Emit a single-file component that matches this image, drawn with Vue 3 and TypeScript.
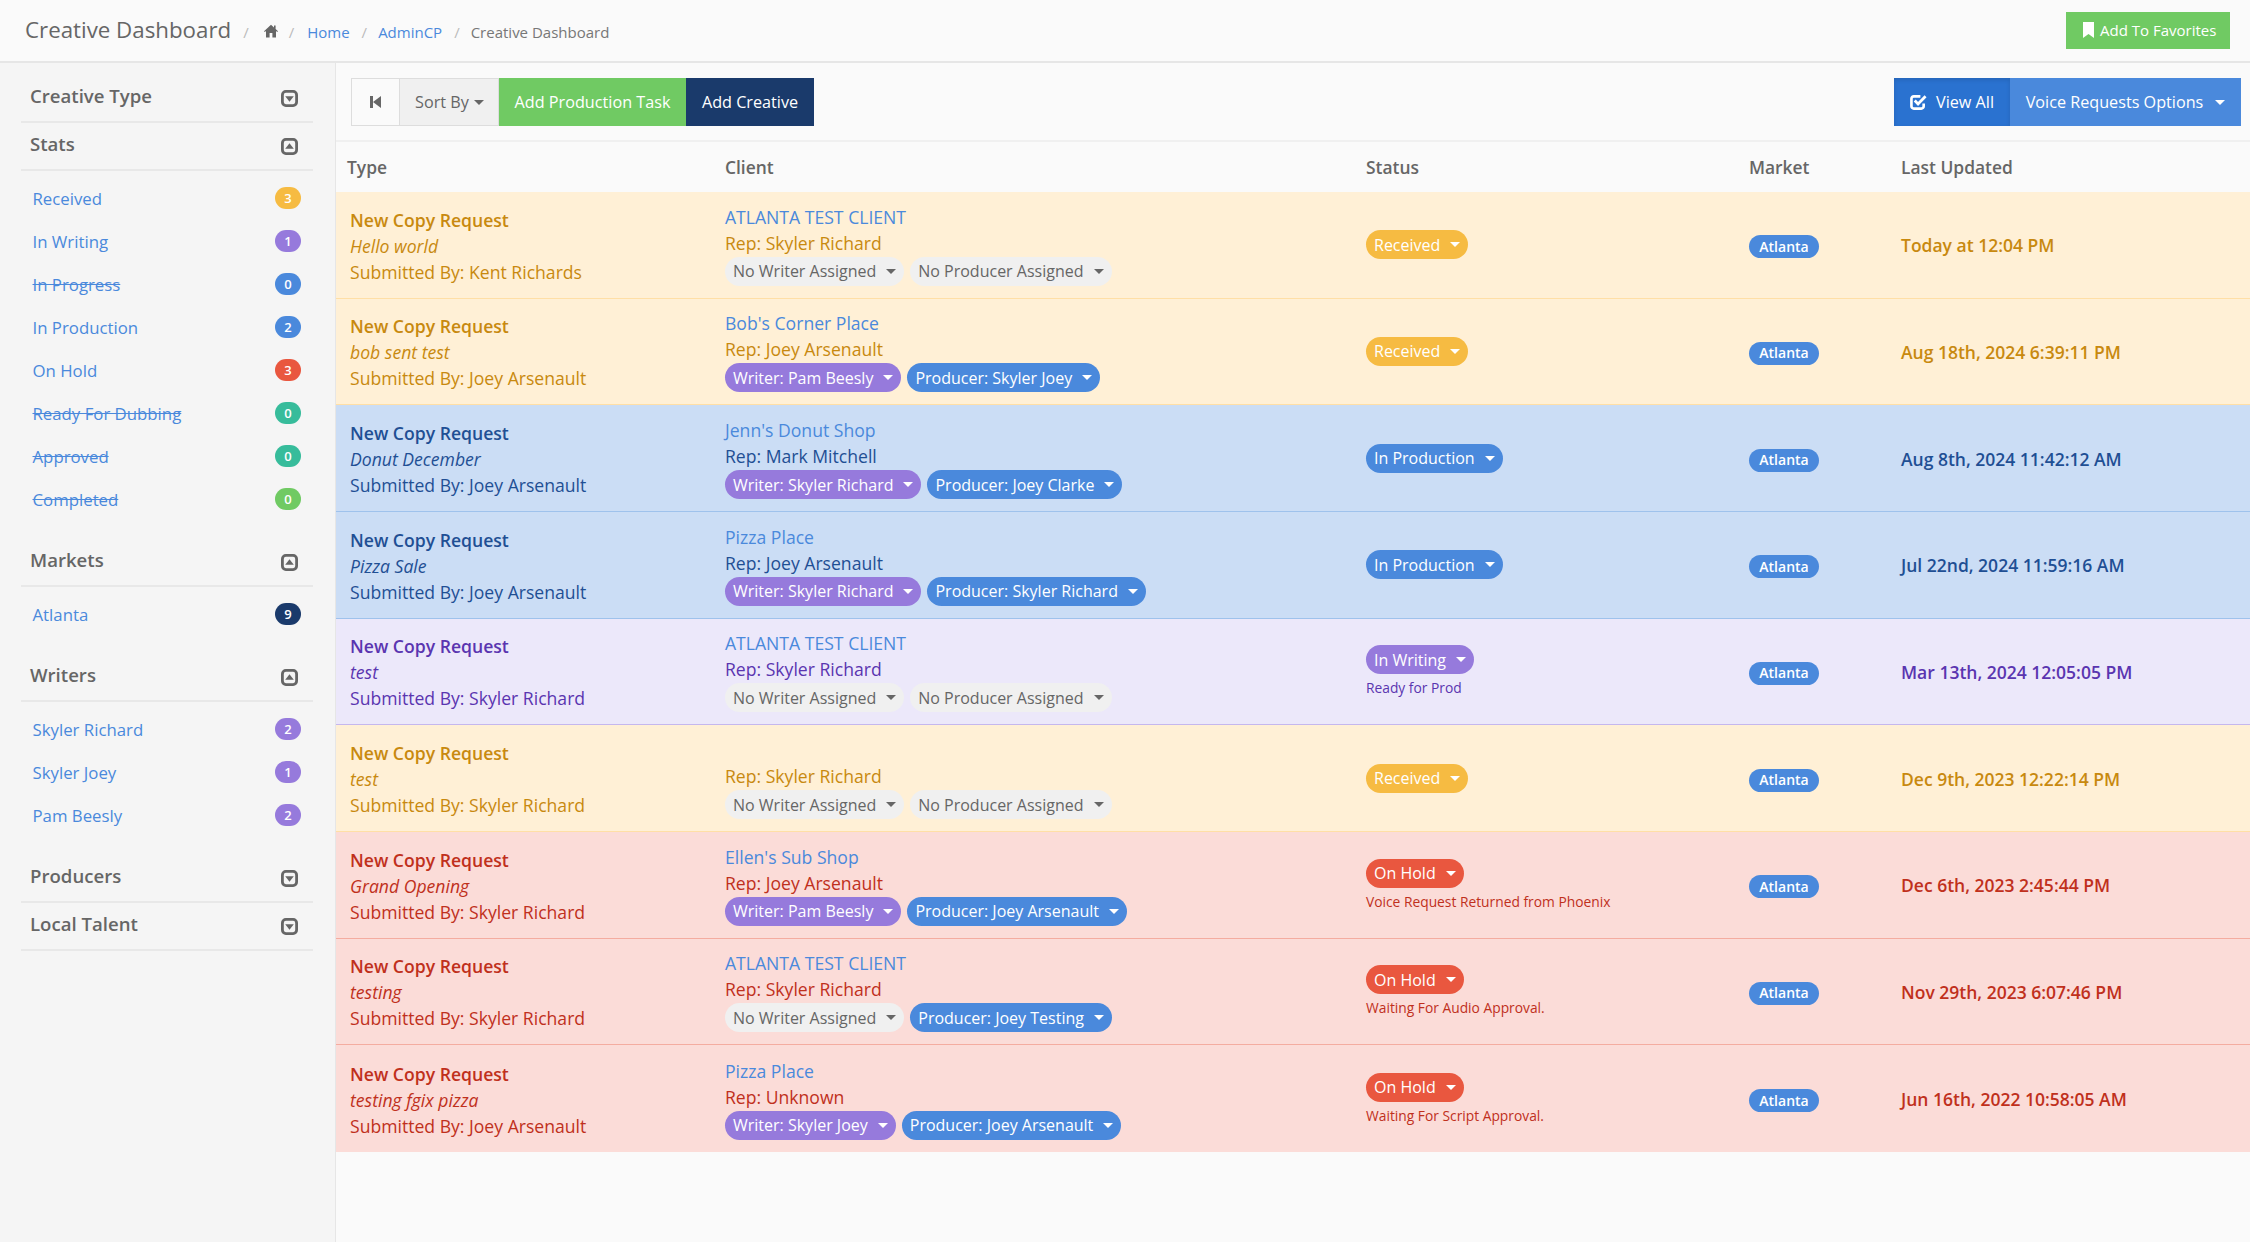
<script setup lang="ts">
type Tone = 'warning' | 'primary' | 'alert' | 'danger'
interface Person { label: string; kind: 'none' | 'writer' | 'producer' }
interface Row {
  tone: Tone; name: string; sub: string; by: string; client: string; rep: string;
  people: Person[]; status: string; note?: string; updated: string
}
interface Item { label: string; count: number; color: string; struck?: boolean }

const none: Person[] = [
  { label: 'No Writer Assigned', kind: 'none' },
  { label: 'No Producer Assigned', kind: 'none' },
]
const w = (n: string): Person => ({ label: 'Writer: ' + n, kind: 'writer' })
const p = (n: string): Person => ({ label: 'Producer: ' + n, kind: 'producer' })

const rows: Row[] = [
  { tone: 'warning', name: 'New Copy Request', sub: 'Hello world', by: 'Kent Richards', client: 'ATLANTA TEST CLIENT', rep: 'Skyler Richard', people: none, status: 'Received', updated: 'Today at 12:04 PM' },
  { tone: 'warning', name: 'New Copy Request', sub: 'bob sent test', by: 'Joey Arsenault', client: "Bob's Corner Place", rep: 'Joey Arsenault', people: [w('Pam Beesly'), p('Skyler Joey')], status: 'Received', updated: 'Aug 18th, 2024 6:39:11 PM' },
  { tone: 'primary', name: 'New Copy Request', sub: 'Donut December', by: 'Joey Arsenault', client: "Jenn's Donut Shop", rep: 'Mark Mitchell', people: [w('Skyler Richard'), p('Joey Clarke')], status: 'In Production', updated: 'Aug 8th, 2024 11:42:12 AM' },
  { tone: 'primary', name: 'New Copy Request', sub: 'Pizza Sale', by: 'Joey Arsenault', client: 'Pizza Place', rep: 'Joey Arsenault', people: [w('Skyler Richard'), p('Skyler Richard')], status: 'In Production', updated: 'Jul 22nd, 2024 11:59:16 AM' },
  { tone: 'alert', name: 'New Copy Request', sub: 'test', by: 'Skyler Richard', client: 'ATLANTA TEST CLIENT', rep: 'Skyler Richard', people: none, status: 'In Writing', note: 'Ready for Prod', updated: 'Mar 13th, 2024 12:05:05 PM' },
  { tone: 'warning', name: 'New Copy Request', sub: 'test', by: 'Skyler Richard', client: '', rep: 'Skyler Richard', people: none, status: 'Received', updated: 'Dec 9th, 2023 12:22:14 PM' },
  { tone: 'danger', name: 'New Copy Request', sub: 'Grand Opening', by: 'Skyler Richard', client: "Ellen's Sub Shop", rep: 'Joey Arsenault', people: [w('Pam Beesly'), p('Joey Arsenault')], status: 'On Hold', note: 'Voice Request Returned from Phoenix', updated: 'Dec 6th, 2023 2:45:44 PM' },
  { tone: 'danger', name: 'New Copy Request', sub: 'testing', by: 'Skyler Richard', client: 'ATLANTA TEST CLIENT', rep: 'Skyler Richard', people: [{ label: 'No Writer Assigned', kind: 'none' }, p('Joey Testing')], status: 'On Hold', note: 'Waiting For Audio Approval.', updated: 'Nov 29th, 2023 6:07:46 PM' },
  { tone: 'danger', name: 'New Copy Request', sub: 'testing fgix pizza', by: 'Joey Arsenault', client: 'Pizza Place', rep: 'Unknown', people: [w('Skyler Joey'), p('Joey Arsenault')], status: 'On Hold', note: 'Waiting For Script Approval.', updated: 'Jun 16th, 2022 10:58:05 AM' },
]

const sections: { title: string; open: boolean; items: Item[] }[] = [
  { title: 'Creative Type', open: false, items: [] },
  { title: 'Stats', open: true, items: [
    { label: 'Received', count: 3, color: '#f6bb42' },
    { label: 'In Writing', count: 1, color: '#967adc' },
    { label: 'In Progress', count: 0, color: '#4a89dc', struck: true },
    { label: 'In Production', count: 2, color: '#4a89dc' },
    { label: 'On Hold', count: 3, color: '#e9573f' },
    { label: 'Ready For Dubbing', count: 0, color: '#37bc9b', struck: true },
    { label: 'Approved', count: 0, color: '#37bc9b', struck: true },
    { label: 'Completed', count: 0, color: '#70ca63', struck: true },
  ] },
  { title: 'Markets', open: true, items: [{ label: 'Atlanta', count: 9, color: '#1a3a6b' }] },
  { title: 'Writers', open: true, items: [
    { label: 'Skyler Richard', count: 2, color: '#967adc' },
    { label: 'Skyler Joey', count: 1, color: '#967adc' },
    { label: 'Pam Beesly', count: 2, color: '#967adc' },
  ] },
  { title: 'Producers', open: false, items: [] },
  { title: 'Local Talent', open: false, items: [] },
]
const heads = ['Type', 'Client', 'Status', 'Market', 'Last Updated']
</script>

<template>
  <div class="page">
    <header class="topbar">
      <h1 class="title">Creative Dashboard</h1>
      <nav class="crumbs">
        <span class="sep first">/</span>
        <svg class="home" viewBox="0 0 14 14" width="14" height="14"><path d="M7 .8 0 7.2l.8.9L2 7v6.4h3.6V9h2.800v4.400H12V7l1.200 1.100.8-.9-2.400-2.200V1.600H10v1.900z" fill="#666" /></svg>
        <span class="sep second">/</span>
        <a class="link">Home</a>
        <span class="sep">/</span>
        <a class="link">AdminCP</a>
        <span class="sep">/</span>
        <span class="here">Creative Dashboard</span>
      </nav>
      <button class="fav">
        <svg viewBox="0 0 11 16" width="11" height="16"><path d="M0 0h11v16L5.500 12 0 16z" fill="#fff" /></svg>
        Add To Favorites
      </button>
    </header>

    <div class="body">
      <aside class="side">
        <section v-for="s in sections" :key="s.title" class="sec">
          <div class="sec-head">
            <span class="sec-title">{{ s.title }}</span>
            <svg class="toggle" viewBox="0 0 17 17" width="17" height="17">
              <rect x="1.400" y="1.400" width="14.200" height="14.200" rx="3.500" fill="none" stroke="#666" stroke-width="2.800" />
              <path v-if="s.open" d="M8.500 5.200 12.800 10.800H4.200z" fill="#666" />
              <path v-else d="M4.200 6.200h8.600L8.500 11.800z" fill="#666" />
            </svg>
          </div>
          <ul v-if="s.items.length" class="list">
            <li v-for="i in s.items" :key="i.label" class="item">
              <a class="item-link" :class="{ struck: i.struck }">{{ i.label }}</a>
              <span class="count" :style="{ background: i.color }">{{ i.count }}</span>
            </li>
          </ul>
        </section>
      </aside>

      <main class="main">
        <div class="toolbar">
          <div class="group">
            <button class="btn prev">
              <svg viewBox="0 0 12 14" width="12" height="14"><path d="M0 1h3v12H0zM3 7l8-6v12z" fill="#666" /></svg>
            </button>
            <button class="btn sort">Sort By <i class="caret dark small"></i></button>
            <button class="btn green">Add Production Task</button>
            <button class="btn navy">Add Creative</button>
          </div>
          <div class="group">
            <button class="btn deep">
              <svg viewBox="0 0 18 17" width="17" height="16"><path d="M14.500 10v3a2.500 2.500 0 0 1-2.500 2.500H4A2.500 2.500 0 0 1 1.500 13V5A2.500 2.500 0 0 1 4 2.500h7" fill="none" stroke="#fff" stroke-width="2.800" /><path d="M5 7 8.500 10.500 16.500 2.500" fill="none" stroke="#fff" stroke-width="3" /></svg>
              View All
            </button>
            <button class="btn blue">Voice Requests Options <i class="caret"></i></button>
          </div>
        </div>

        <div class="grid head">
          <div v-for="h in heads" :key="h" class="th">{{ h }}</div>
        </div>
        <div v-for="(r, idx) in rows" :key="idx" class="grid row" :class="r.tone">
          <div class="cell type">
            <div class="strong">{{ r.name }}</div>
            <div class="ital">{{ r.sub }}</div>
            <div>Submitted By: {{ r.by }}</div>
          </div>
          <div class="cell client">
            <a class="client-name">{{ r.client }}</a>
            <div class="rep">Rep: {{ r.rep }}</div>
            <div class="pills">
              <span v-for="q in r.people" :key="q.label" class="pill" :class="q.kind">{{ q.label }}<i class="caret" :class="{ dark: q.kind === 'none' }"></i></span>
            </div>
          </div>
          <div class="cell status" :class="{ noted: r.note }">
            <span class="pill state" :class="r.tone">{{ r.status }}<i class="caret"></i></span>
            <div v-if="r.note" class="note">{{ r.note }}</div>
          </div>
          <div class="cell market"><span class="tag">Atlanta</span></div>
          <div class="cell date">{{ r.updated }}</div>
        </div>
      </main>
    </div>
  </div>
</template>

<style>
html, body { margin: 0; background: #fafafa; }
</style>

<style scoped>
* { box-sizing: border-box; }
.page { min-height: 100vh; display: flex; flex-direction: column; background: #fafafa; color: #666; font-family: "Open Sans", "Noto Sans", sans-serif; font-size: 16px; }
.topbar { height: 63px; flex: none; display: flex; align-items: center; padding: 0 20px 0 25px; border-bottom: 2px solid #e6e6e6; }
.title { margin: -2px 0 0; font-size: 22.300px; font-weight: 400; color: #666; line-height: 30px; }
.crumbs { display: flex; align-items: center; font-size: 15px; margin-top: 3px; flex: 1; }
.sep { color: #bbb; margin: 0 11px 0 12px; font-size: 15px; }
.sep.first { margin: 0 15px 0 12px; }
.sep.second { margin: 0 13px 0 11px; }
.home { margin-top: -3px; }
.link { color: #4a89dc; }
.here { color: #777; }
.fav { width: 164px; height: 37px; margin-top: -1px; display: flex; align-items: center; gap: 6px; padding: 0 0 0 17px; border: 0; background: #70ca63; color: #fff; font: 15px "Open Sans", sans-serif; white-space: nowrap; }
.body { flex: 1; display: flex; }
.side { width: 336px; flex: none; padding: 12px 22px 0 21px; background: #f5f5f5; border-right: 1px solid #e6e6e6; }
.sec-head { height: 48px; display: flex; align-items: center; justify-content: space-between; padding: 0 15px 6px 9px; border-bottom: 2px solid #e8e8e8; }
.sec-title { font-size: 18.600px; font-weight: 600; color: #666; }
.toggle { margin-top: 6px; }
.list { list-style: none; margin: 0; padding: 6px 12px 18px 11.500px; }
.item { height: 43px; display: flex; align-items: center; justify-content: space-between; }
.item-link { color: #4a89dc; font-size: 16.800px; font-weight: 500; }
.struck { text-decoration: line-through; }
.count { width: 26px; height: 22px; margin-top: -2px; border-radius: 11px; color: #fff; font-size: 13px; font-weight: 600; display: flex; align-items: center; justify-content: center; }
.main { flex: 1; min-width: 0; }
.toolbar { display: flex; justify-content: space-between; padding: 15px 9px 15px 15px; height: 79px; border-bottom: 2px solid #f0f0f0; }
.group { display: flex; }
.btn { height: 48px; border: 0; color: #fff; font: 16.200px "Open Sans", sans-serif; padding: 0 15px; display: flex; align-items: center; white-space: nowrap; }
.prev { width: 49px; justify-content: center; background: #fafafa; border: 1px solid #ddd; padding: 0; }
.sort { width: 99px; justify-content: center; gap: 5px; background: #f0f0f0; border: 1px solid #ddd; border-left: 0; color: #666; padding: 0 0 0 1px; }
.green { width: 187px; justify-content: center; background: #70ca63; padding: 0; }
.navy { width: 128px; justify-content: center; background: #1a3a6b; padding: 0; }
.deep { width: 116px; justify-content: center; gap: 9px; background: #2a72d0; padding: 0; box-shadow: inset 0 2px 4px rgba(0, 0, 0, .12); }
.blue { width: 231px; justify-content: center; gap: 12px; background: #4a89dc; padding: 0; }
.caret { display: inline-block; width: 0; height: 0; border-left: 5px solid transparent; border-right: 5px solid transparent; border-top: 5px solid #fff; vertical-align: middle; }
.caret.dark { border-top-color: #666; }
.caret.small { border-width: 5px 5px 0; }
.grid { display: grid; grid-template-columns: 378px 641px 383px 152px 1fr; }
.head { height: 50px; align-items: center; }
.th { padding-left: 11px; font-size: 17.400px; font-weight: 600; color: #666; }
.row { height: 106.667px; border-bottom: 1px solid; font-size: 17.600px; }
.row:last-child { border-bottom: 0; }
.warning { background: #fff0d6; color: #c8890f; border-color: #ffdfa6; }
.primary { background: #cbddf5; color: #1f4f94; border-color: #9fc2ec; }
.alert { background: #ece8fa; color: #5a35b0; border-color: #c5b7ee; }
.danger { background: #fbdcd8; color: #c0301c; border-color: #f4aca0; }
.cell { padding-left: 11px; display: flex; flex-direction: column; justify-content: center; line-height: 26px; }
.type { padding-left: 14px; padding-top: 2px; }
.strong { font-weight: 600; }
.ital { font-style: italic; }
.client-name { height: 26px; color: #4a89dc; }
.rep { height: 26px; }
.pills { display: flex; gap: 6px; margin-top: 1px; }
.pill { height: 29px; padding: 0 8px; border-radius: 14.500px; display: inline-flex; align-items: center; justify-content: space-between; gap: 10px; font-size: 16px; color: #fff; white-space: nowrap; }
.pill.none { background: #f0f0f0; color: #666; }
.pill.writer { background: #967adc; }
.pill.producer { background: #4a89dc; }
.state { align-self: flex-start; }
.state.warning { background: #f6bb42; color: #fff; }
.state.primary { background: #4a89dc; color: #fff; }
.state.alert { background: #967adc; color: #fff; }
.state.danger { background: #e9573f; color: #fff; }
.note { font-size: 13.800px; line-height: 18px; margin-top: 5px; }
.market { align-items: flex-start; padding-top: 4px; }
.tag { width: 70px; height: 23px; background: #4a89dc; color: #fff; border-radius: 11.500px; font-size: 14px; font-weight: 600; display: flex; align-items: center; justify-content: center; }
.date { font-weight: 600; font-size: 17.500px; padding-top: 1px; }
</style>
